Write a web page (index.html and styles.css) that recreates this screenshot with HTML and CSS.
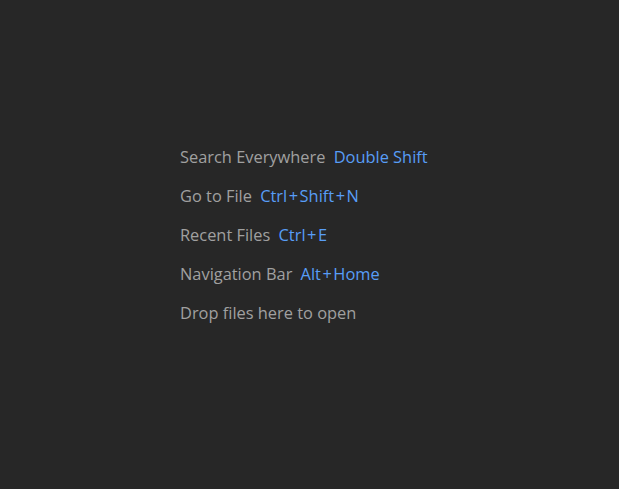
FILE: index.html
```html
<!DOCTYPE html>
<html>
<head>
<meta charset="utf-8">
<link rel="stylesheet" href="styles.css">
</head>
<body>
<div class="hints">
  <div class="row">Search Everywhere <span class="key">Double Shift</span></div>
  <div class="row">Go to File <span class="key">Ctrl<span class="plus">+</span>Shift<span class="plus">+</span>N</span></div>
  <div class="row">Recent Files <span class="key">Ctrl<span class="plus">+</span>E</span></div>
  <div class="row">Navigation Bar <span class="key">Alt<span class="plus">+</span>Home</span></div>
  <div class="row">Drop files here to open</div>
</div>
</body>
</html>
```
FILE: styles.css
```css
html, body {
  margin: 0;
  height: 100%;
  background: #272727;
}
body {
  font-family: "Open Sans", "Noto Sans", sans-serif;
  font-size: 16.4px;
  color: #a0a0a0;
}
.hints {
  padding: 137px 0 0 180px;
  display: flex;
  flex-direction: column;
}
.row {
  line-height: 39px;
  white-space: pre;
}
.key {
  color: #589df6;
  margin-left: 4px;
}
.plus {
  margin: 0 1.5px;
}
```
